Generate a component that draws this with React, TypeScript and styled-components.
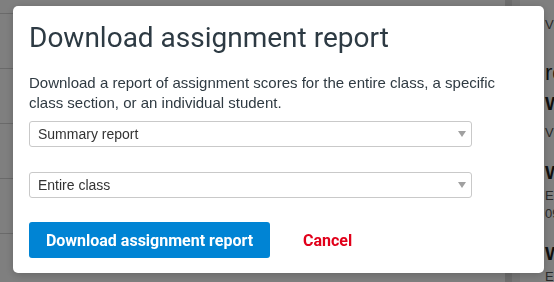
import React from "react";
import styled, { createGlobalStyle } from "styled-components";

const Global = createGlobalStyle`
  html, body { margin: 0; padding: 0; background: #fff; }
  body { width: 554px; height: 282px; overflow: hidden; font-family: "Liberation Sans", Arial, sans-serif; }
`;

const Page = styled.div`
  display: flex;
  width: 554px;
  height: 282px;
  overflow: hidden;
`;

const MainList = styled.div`
  width: 505px;
  display: flex;
  flex-direction: column;
  margin-top: -41px;
`;

const ListRow = styled.div`
  height: 54px;
  flex: none;
  border-bottom: 1px solid #d4d4d4;
`;

const ScrollTrack = styled.div`
  width: 7px;
  background: #dadada;
`;

const Gutter = styled.div`
  width: 8px;
  background: #eeeeee;
`;

const Side = styled.div`
  flex: 1;
  padding: 0 0 0 25px;
  display: flex;
  flex-direction: column;
  white-space: nowrap;
  overflow: hidden;
  font-family: "Liberation Sans", Arial, sans-serif;
  color: #333;
`;

const SideText = styled.div<{ $size: number; $top: number; $bold?: boolean; $muted?: boolean }>`
  font-size: ${(p) => p.$size}px;
  line-height: ${(p) => Math.round(p.$size * 1.2)}px;
  margin-top: ${(p) => p.$top}px;
  font-weight: ${(p) => (p.$bold ? 700 : 400)};
  color: ${(p) => (p.$muted ? "#555" : "#1e1e1e")};
`;

const Overlay = styled.div`
  position: fixed;
  inset: 0;
  background: rgba(0, 0, 0, 0.5);
  display: flex;
  align-items: flex-start;
  justify-content: flex-start;
  padding: 6px 0 0 13px;
`;

const Modal = styled.div`
  width: 531px;
  box-sizing: border-box;
  background: #fff;
  border-radius: 5px;
  padding: 15px 16px 15px 16px;
  box-shadow: 0 2px 8px rgba(0, 0, 0, 0.2);
`;

const Title = styled.h1`
  margin: 0;
  font-family: Roboto, "Liberation Sans", sans-serif;
  font-weight: 400;
  font-size: 28px;
  line-height: 33px;
  color: #2d3a43;
`;

const Description = styled.p`
  margin: 19px 0 0 0;
  font-size: 15px;
  line-height: 20px;
  color: #2f3a42;
`;

const SelectWrap = styled.div<{ $top: number }>`
  position: relative;
  width: 443px;
  margin-top: ${(p) => p.$top}px;
`;

const Select = styled.select`
  appearance: none;
  -webkit-appearance: none;
  display: block;
  width: 100%;
  height: 26px;
  box-sizing: border-box;
  border: 1px solid #c9c9c9;
  border-radius: 3px;
  background: #fff;
  padding: 0 20px 0 8px;
  font-family: "Liberation Sans", Arial, sans-serif;
  font-size: 14px;
  color: #333;
  outline: none;
`;

const Arrow = styled.svg`
  position: absolute;
  right: 6px;
  top: 10px;
  width: 8px;
  height: 6px;
  pointer-events: none;
`;

const Actions = styled.div`
  display: flex;
  align-items: center;
  gap: 33px;
  margin-top: 24px;
`;

const PrimaryButton = styled.button`
  height: 36px;
  width: 241px;
  border: none;
  border-radius: 3px;
  background: #0084d4;
  color: #fff;
  font-family: Roboto, "Liberation Sans", sans-serif;
  font-weight: 700;
  font-size: 16px;
  padding: 0;
  cursor: pointer;
`;

const LinkButton = styled.button`
  border: none;
  background: none;
  padding: 0;
  color: #e1001a;
  font-family: Roboto, "Liberation Sans", sans-serif;
  font-weight: 700;
  font-size: 16px;
  cursor: pointer;
`;

const SelectField = ({ value, options, top }: { value: string; options: string[]; top: number }) => (
  <SelectWrap $top={top}>
    <Select defaultValue={value}>
      {options.map((o) => (
        <option key={o}>{o}</option>
      ))}
    </Select>
    <Arrow viewBox="0 0 8 6">
      <polygon points="0,0 8,0 4,6" fill="#a0a0a0" />
    </Arrow>
  </SelectWrap>
);

export default function App() {
  return (
    <>
      <Global />
      <Page>
        <MainList>
          {[0, 1, 2, 3, 4, 5].map((i) => (
            <ListRow key={i} />
          ))}
        </MainList>
        <ScrollTrack />
        <Gutter />
        <Side>
          <SideText $size={13} $top={17} $muted>View all</SideText>
          <SideText $size={22} $top={27}>recent work</SideText>
          <SideText $size={19} $top={6} $bold>Week 3 homework</SideText>
          <SideText $size={13} $top={10} $muted>View details</SideText>
          <SideText $size={19} $top={20} $bold>Week 2 quiz</SideText>
          <SideText $size={13} $top={4} $muted>Ends on</SideText>
          <SideText $size={13} $top={2} $muted>09/12/2018</SideText>
          <SideText $size={19} $top={20} $bold>Week 1 lab</SideText>
          <SideText $size={13} $top={4} $muted>Ends on</SideText>
        </Side>
      </Page>
      <Overlay>
        <Modal>
          <Title>Download assignment report</Title>
          <Description>
            Download a report of assignment scores for the entire class, a specific class section, or an individual student.
          </Description>
          <SelectField value="Summary report" options={["Summary report", "Detailed report"]} top={8} />
          <SelectField value="Entire class" options={["Entire class", "Class section", "Individual student"]} top={25} />
          <Actions>
            <PrimaryButton>Download assignment report</PrimaryButton>
            <LinkButton>Cancel</LinkButton>
          </Actions>
        </Modal>
      </Overlay>
    </>
  );
}
